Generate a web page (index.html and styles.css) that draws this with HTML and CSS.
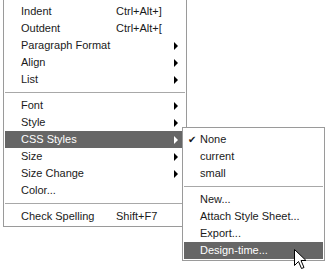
FILE: index.html
```html
<!DOCTYPE html>
<html lang="en">
<head>
  <meta charset="UTF-8" />
  <title>Text Menu</title>
  <link rel="stylesheet" href="styles.css">
</head>
<body>
  <div class="menu main-menu">
    <div class="item"><span class="label">Indent</span><span class="key">Ctrl+Alt+]</span></div>
    <div class="item"><span class="label">Outdent</span><span class="key">Ctrl+Alt+[</span></div>
    <div class="item"><span class="label">Paragraph Format</span><span class="arrow"></span></div>
    <div class="item"><span class="label">Align</span><span class="arrow"></span></div>
    <div class="item"><span class="label">List</span><span class="arrow"></span></div>
    <div class="sep"></div>
    <div class="item"><span class="label">Font</span><span class="arrow"></span></div>
    <div class="item"><span class="label">Style</span><span class="arrow"></span></div>
    <div class="item active"><span class="label">CSS Styles</span><span class="arrow"></span></div>
    <div class="item"><span class="label">Size</span><span class="arrow"></span></div>
    <div class="item"><span class="label">Size Change</span><span class="arrow"></span></div>
    <div class="item"><span class="label">Color...</span></div>
    <div class="sep"></div>
    <div class="item"><span class="label">Check Spelling</span><span class="key">Shift+F7</span></div>
  </div>

  <div class="menu sub-menu">
    <div class="item"><span class="check">&#10004;</span>None</div>
    <div class="item">current</div>
    <div class="item">small</div>
    <div class="sep"></div>
    <div class="item">New...</div>
    <div class="item">Attach Style Sheet...</div>
    <div class="item">Export...</div>
    <div class="item active">Design-time...</div>
  </div>

  <svg class="cursor" width="13" height="22" viewBox="0 0 13 22">
    <path d="M0.5 0.5 L0.5 16.5 L4.5 12.5 L7.5 19.5 L10 18.5 L7 11.5 L12 11.5 Z" fill="#fff" stroke="#000" stroke-width="1"/>
  </svg>
</body>
</html>
```

FILE: styles.css
```css
body {
  margin: 0;
  background: #ffffff;
  font-family: "Liberation Sans", Arial, sans-serif;
  font-size: 11px;
  color: #1a1a1a;
  position: relative;
  height: 272px;
  overflow: hidden;
}
.menu {
  background: #ffffff;
  border: 1px solid #9a9a9a;
  box-sizing: border-box;
}
.main-menu {
  width: 184px;
  margin: -1px 0 0 3px;
  padding: 3px 1px 1px 1px;
}
.item {
  height: 17px;
  line-height: 17px;
  display: flex;
  align-items: center;
  padding-left: 16px;
  white-space: nowrap;
}
.main-menu .label {
  width: 95px;
}
.key {
  flex: 1;
}
.arrow {
  margin-left: auto;
  margin-right: 7px;
  width: 0;
  height: 0;
  border-top: 4px solid transparent;
  border-bottom: 4px solid transparent;
  border-left: 4px solid #000;
}
.item.active {
  background: #666666;
  color: #ffffff;
}
.item.active .arrow {
  border-left-color: #ffffff;
}
.sep {
  height: 9px;
  display: flex;
  align-items: center;
}
.sep::before {
  content: "";
  flex: 1;
  border-top: 1px solid #a8a8a8;
}
.sub-menu {
  position: absolute;
  left: 182px;
  top: 127px;
  width: 143px;
  padding: 3px 1px 1px 1px;
}
.sub-menu .item {
  position: relative;
}
.check {
  position: absolute;
  left: 4px;
  font-size: 10px;
}
.cursor {
  position: absolute;
  left: 294px;
  top: 249px;
}
```
